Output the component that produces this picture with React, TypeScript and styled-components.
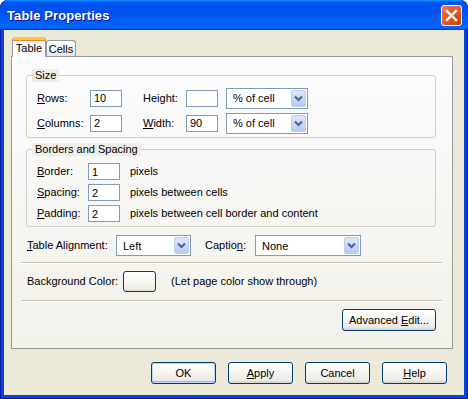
import { ReactElement, ReactNode } from 'react'
import styled, { createGlobalStyle } from 'styled-components'

const GlobalStyle = createGlobalStyle`
  html, body {
    margin: 0;
    padding: 0;
    background: #ffffff;
  }
  body {
    font-family: "Liberation Sans", Arial, sans-serif;
    font-size: 11px;
    color: #000000;
  }
`

function Select({ value, width }: { value: string; width: number }): ReactElement {
  return (
    <SelectBox $w={width}>
      <SelectValue>{value}</SelectValue>
      <ArrowBox>
        <svg width="9" height="7" viewBox="0 0 9 7">
          <path d="M1 1.5 L4.5 5 L8 1.5" fill="none" stroke="#4d6185" strokeWidth="2" />
        </svg>
      </ArrowBox>
    </SelectBox>
  )
}

function Group({ title, children }: { title: string; children: ReactNode }): ReactElement {
  return (
    <Fieldset>
      <Legend>{title}</Legend>
      {children}
    </Fieldset>
  )
}

function App(): ReactElement {
  return (
    <>
      <GlobalStyle />
      <Window>
        <TitleBar>
          <Title>Table Properties</Title>
          <CloseButton aria-label="close">
            <svg width="13" height="13" viewBox="0 0 13 13">
              <path d="M2 2 L11 11 M11 2 L2 11" stroke="#ffffff" strokeWidth="2.4" strokeLinecap="square" />
            </svg>
          </CloseButton>
        </TitleBar>
        <Client>
          <TabStrip>
            <Tab $active>Table</Tab>
            <Tab>Cells</Tab>
          </TabStrip>
          <Panel>
            <Group title="Size">
              <Rows $gap={5}>
                <FieldRow $h={20}>
                  <Label $w={54}><u>R</u>ows:</Label>
                  <TextInput $w={32} value="10" />
                  <Label $w={44} $ml={20}>Hei<u>g</u>ht:</Label>
                  <TextInput $w={32} value="" />
                  <SelectSlot $ml={8}>
                    <Select value="% of cell" width={82} />
                  </SelectSlot>
                </FieldRow>
                <FieldRow $h={20}>
                  <Label $w={54}><u>C</u>olumns:</Label>
                  <TextInput $w={32} value="2" />
                  <Label $w={44} $ml={20}><u>W</u>idth:</Label>
                  <TextInput $w={32} value="90" />
                  <SelectSlot $ml={8}>
                    <Select value="% of cell" width={82} />
                  </SelectSlot>
                </FieldRow>
              </Rows>
            </Group>
            <Spacer $h={5} />
            <Group title="Borders and Spacing">
              <Rows $gap={4} $pt={7}>
                <FieldRow $h={17}>
                  <Label $w={52}><u>B</u>order:</Label>
                  <TextInput $w={32} value="1" />
                  <Label $ml={9}>pixels</Label>
                </FieldRow>
                <FieldRow $h={17}>
                  <Label $w={52}><u>S</u>pacing:</Label>
                  <TextInput $w={32} value="2" />
                  <Label $ml={9}>pixels between cells</Label>
                </FieldRow>
                <FieldRow $h={17}>
                  <Label $w={52}><u>P</u>adding:</Label>
                  <TextInput $w={32} value="2" />
                  <Label $ml={9}>pixels between cell border and content</Label>
                </FieldRow>
              </Rows>
            </Group>
            <LineRow $mt={8} $h={21}>
              <Label $w={90}><u>T</u>able Alignment:</Label>
              <Select value="Left" width={75} />
              <Label $w={51} $ml={13}>Captio<u>n</u>:</Label>
              <Select value="None" width={106} />
            </LineRow>
            <Separator $mt={6} />
            <LineRow $mt={7} $h={21}>
              <Label $w={97}>Background Color:</Label>
              <ColorButton aria-label="background color" />
              <Label $ml={14}>(Let page color show through)</Label>
            </LineRow>
            <Separator $mt={8} />
            <RightRow $mt={7}>
              <PushButton $w={94}>Advanced <u>E</u>dit...</PushButton>
            </RightRow>
          </Panel>
          <DialogButtons>
            <PushButton $w={65} $default>OK</PushButton>
            <PushButton $w={65}><u>A</u>pply</PushButton>
            <PushButton $w={65}>Cancel</PushButton>
            <PushButton $w={65}><u>H</u>elp</PushButton>
          </DialogButtons>
        </Client>
      </Window>
    </>
  )
}

export default App

const Window = styled.div`
  width: 468px;
  height: 399px;
  box-sizing: border-box;
  display: flex;
  flex-direction: column;
  background: #0843d9;
  border-radius: 8px 8px 0 0;
  box-shadow: inset 1px 0 #0019a8, inset -1px 0 #001ea0, inset 0 -1px #001ea0;
  overflow: hidden;
`

const TitleBar = styled.div`
  height: 30px;
  flex: none;
  display: flex;
  align-items: center;
  justify-content: space-between;
  padding: 0 6px 0 7px;
  box-sizing: border-box;
  border-radius: 8px 8px 0 0;
  background: linear-gradient(
    180deg,
    #0997ff 0%,
    #0053ee 8%,
    #0050ee 40%,
    #0066ff 88%,
    #0066ff 93%,
    #005bff 95%,
    #003dd7 96%,
    #003dd7 100%
  );
`

const Title = styled.span`
  color: #ffffff;
  font-family: "Liberation Sans", Arial, sans-serif;
  font-weight: bold;
  font-size: 13px;
  letter-spacing: 0.1px;
  text-shadow: 1px 1px #0f1089;
  margin-top: 1px;
`

const CloseButton = styled.div`
  width: 21px;
  height: 21px;
  box-sizing: border-box;
  border: 1px solid #ffffff;
  border-radius: 3px;
  display: flex;
  align-items: center;
  justify-content: center;
  background: radial-gradient(circle at 90% 90%, #cc4600 0%, #dc5a2a 55%, #e8805a 100%);
  margin-top: 1px;
`

const Client = styled.div`
  flex: 1;
  margin: 0 4px 4px;
  background: #ece9d8;
  padding: 7px 11px 0 7px;
  display: flex;
  flex-direction: column;
`

const TabStrip = styled.div`
  display: flex;
  align-items: flex-end;
  height: 20px;
  padding-left: 1px;
  margin-bottom: -1px;
  position: relative;
  z-index: 1;
`

const Tab = styled.div<{ $active?: boolean }>`
  box-sizing: border-box;
  display: flex;
  align-items: center;
  justify-content: center;
  border: 1px solid #919b9c;
  border-bottom: none;
  border-radius: 3px 3px 0 0;
  height: ${(p) => (p.$active ? 20 : 16)}px;
  width: ${(p) => (p.$active ? 34 : 30)}px;
  margin-bottom: ${(p) => (p.$active ? 0 : 1)}px;
  border-top: ${(p) => (p.$active ? '3px solid #ffc73c' : '1px solid #919b9c')};
  background: ${(p) => (p.$active ? '#fcfcfe' : 'linear-gradient(180deg, #ffffff 0%, #f3f3ef 60%, #e7e6df 100%)')};
  ${(p) => (p.$active ? 'box-shadow: inset 0 1px #e68b2c; padding-bottom: 2px;' : '')}
`

const Panel = styled.div`
  height: 293px;
  flex: none;
  box-sizing: border-box;
  border: 1px solid #919b9c;
  background: linear-gradient(180deg, #fcfcfe 0%, #f6f5f1 60%, #f2f1ea 100%);
  padding: 12px 0 0 14px;
  display: flex;
  flex-direction: column;
`

const Fieldset = styled.fieldset`
  margin: 0;
  width: 410px;
  box-sizing: border-box;
  min-width: 0;
  padding: 0 9px 4px 9px;
  border: 1px solid #d0d0bf;
  border-radius: 3px;
`

const Legend = styled.legend`
  padding: 0 3px;
  margin-left: -4px;
  line-height: 13px;
  background: #efeee6;
`

const Rows = styled.div<{ $gap: number; $pt?: number }>`
  display: flex;
  flex-direction: column;
  gap: ${(p) => p.$gap}px;
  padding-top: ${(p) => p.$pt ?? 6}px;
`

const FieldRow = styled.div<{ $h: number }>`
  display: flex;
  align-items: center;
  height: ${(p) => p.$h}px;
`

const LineRow = styled.div<{ $mt: number; $h: number }>`
  display: flex;
  align-items: center;
  height: ${(p) => p.$h}px;
  margin-top: ${(p) => p.$mt}px;
`

const RightRow = styled.div<{ $mt: number }>`
  display: flex;
  justify-content: flex-end;
  margin-top: ${(p) => p.$mt}px;
  padding-right: 16px;
`

const Spacer = styled.div<{ $h: number }>`
  height: ${(p) => p.$h}px;
  flex: none;
`

const Label = styled.span<{ $w?: number; $ml?: number }>`
  flex: none;
  white-space: nowrap;
  ${(p) => (p.$w ? `width: ${p.$w}px;` : '')}
  margin-left: ${(p) => p.$ml ?? 0}px;
  line-height: 13px;
  padding-left: 1px;
  box-sizing: border-box;
`

const TextInput = styled.input.attrs({ readOnly: true, type: 'text' })<{ $w: number }>`
  flex: none;
  width: ${(p) => p.$w}px;
  height: 17px;
  box-sizing: border-box;
  border: 1px solid #7f9db9;
  background: #ffffff;
  padding: 0 0 0 3px;
  margin: 0;
  font-family: "Liberation Sans", Arial, sans-serif;
  font-size: 11px;
  color: #000000;
  outline: none;
`

const SelectSlot = styled.div<{ $ml: number }>`
  margin-left: ${(p) => p.$ml}px;
  display: flex;
`

const SelectBox = styled.div<{ $w: number }>`
  flex: none;
  width: ${(p) => p.$w}px;
  height: 21px;
  box-sizing: border-box;
  border: 1px solid #7f9db9;
  background: #ffffff;
  display: flex;
  align-items: stretch;
  padding: 1px;
`

const SelectValue = styled.span`
  flex: 1;
  display: flex;
  align-items: center;
  padding-left: 5px;
  white-space: nowrap;
`

const ArrowBox = styled.span`
  width: 15px;
  flex: none;
  box-sizing: border-box;
  border: 1px solid #bccdf5;
  border-radius: 2px;
  background: linear-gradient(180deg, #dfe8fe 0%, #c7d6fb 50%, #b7cbf7 100%);
  display: flex;
  align-items: center;
  justify-content: center;
`

const Separator = styled.div<{ $mt: number }>`
  margin-top: ${(p) => p.$mt}px;
  margin-left: -5px;
  width: 421px;
  height: 0;
  border-top: 1px solid #c5c2b2;
  border-bottom: 1px solid #ffffff;
`

const ColorButton = styled.div`
  flex: none;
  width: 33px;
  height: 21px;
  box-sizing: border-box;
  border: 1px solid #003c74;
  border-radius: 3px;
  background: linear-gradient(180deg, #ffffff 0%, #f0f0ea 85%, #dcd8cc 100%);
`

const PushButton = styled.button<{ $w: number; $default?: boolean }>`
  width: ${(p) => p.$w}px;
  height: 22px;
  box-sizing: border-box;
  border: 1px solid #003c74;
  border-radius: 3px;
  padding: 0;
  font-family: "Liberation Sans", Arial, sans-serif;
  font-size: 11px;
  color: #000000;
  background: linear-gradient(180deg, #ffffff 0%, #f5f4ef 50%, #ecebe6 85%, #d6d0c5 100%);
  box-shadow: ${(p) => (p.$default ? 'inset 0 0 0 1px #c2d3fc, inset 0 -1px 0 1px #9fb5f0' : 'none')};
`

const DialogButtons = styled.div`
  display: flex;
  justify-content: flex-end;
  gap: 12px;
  margin-top: 13px;
  margin-right: 6px;
`
